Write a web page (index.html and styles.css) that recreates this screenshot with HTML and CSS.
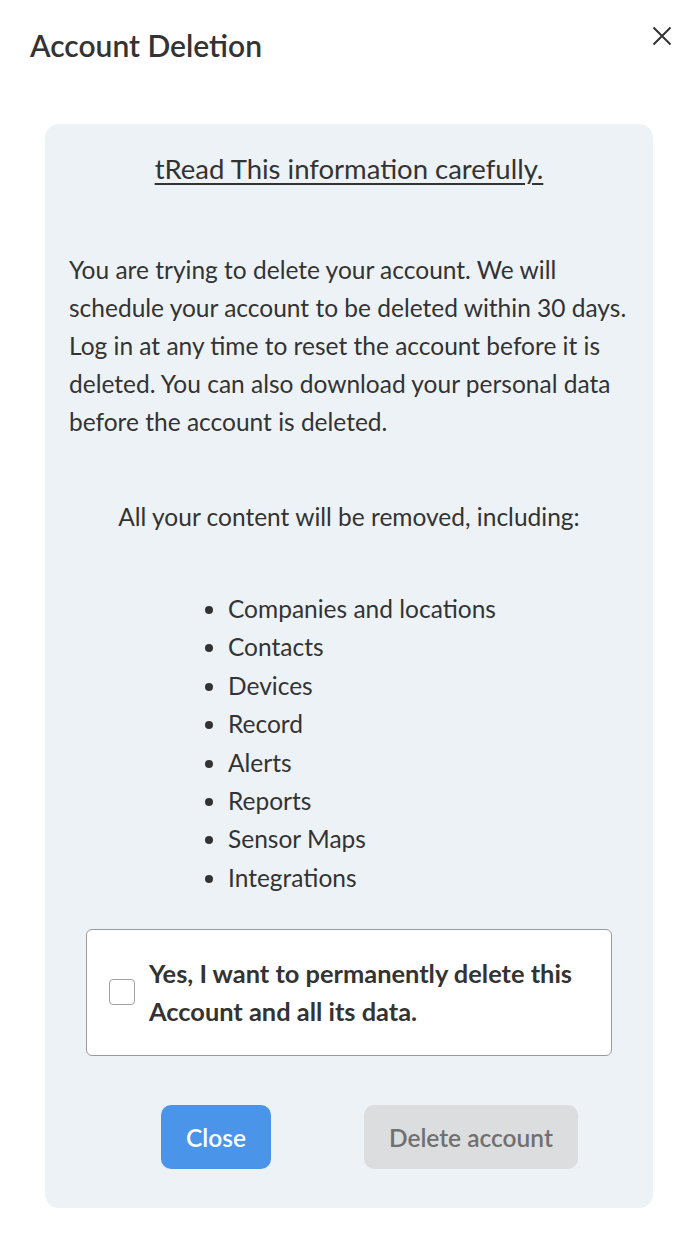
FILE: index.html
```html
<!DOCTYPE html>
<html lang="en">
<head>
<meta charset="utf-8">
<title>Account Deletion</title>
<link rel="stylesheet" href="styles.css">
</head>
<body>
<div class="modal">
  <header class="modal-header">
    <h1 class="modal-title">Account Deletion</h1>
    <button class="modal-close" aria-label="Close">
      <svg width="20" height="20" viewBox="0 0 20 20"><path d="M1.5 1.5L18.5 18.5M18.5 1.5L1.5 18.5" stroke="#333" stroke-width="2" fill="none"/></svg>
    </button>
  </header>
  <section class="card">
    <h2 class="card-heading">tRead This information carefully.</h2>
    <p class="card-text">You are trying to delete your account. We will schedule your account to be deleted within 30 days. Log in at any time to reset the account before it is deleted. You can also download your personal data before the account is deleted.</p>
    <p class="card-lead">All your content will be removed, including:</p>
    <ul class="card-list">
      <li>Companies and locations</li>
      <li>Contacts</li>
      <li>Devices</li>
      <li>Record</li>
      <li>Alerts</li>
      <li>Reports</li>
      <li>Sensor Maps</li>
      <li>Integrations</li>
    </ul>
    <label class="confirm">
      <span class="confirm-box"></span>
      <span class="confirm-text">Yes, I want to permanently delete this Account and all its data.</span>
    </label>
    <div class="actions">
      <button class="btn btn-primary">Close</button>
      <button class="btn btn-disabled">Delete account</button>
    </div>
  </section>
</div>
</body>
</html>
```
FILE: styles.css
```css
* { box-sizing: border-box; }
html, body { margin: 0; padding: 0; background: #ffffff; }
body {
  font-family: "Lato", "Liberation Sans", sans-serif;
  color: #333333;
  width: 688px;
}
.modal-header {
  display: flex;
  justify-content: space-between;
  align-items: flex-start;
  padding: 26px 16px 0 30px;
  height: 124px;
}
.modal-title {
  margin: 0;
  font-size: 30px;
  font-weight: 600;
  line-height: 38px;
  color: #333;
}
.modal-close {
  border: none;
  background: none;
  padding: 0;
  margin-top: 0;
  width: 20px;
  height: 20px;
  cursor: pointer;
}
.card {
  margin: 0 35px 0 45px;
  background: #edf2f6;
  border-radius: 14px;
  padding: 30px 24px 39px 24px;
}
.card-heading {
  margin: 0;
  text-align: center;
  font-size: 27.5px;
  font-weight: 400;
  line-height: 30px;
  text-decoration: underline;
  text-decoration-thickness: 1.5px;
  text-underline-offset: 4px;
}
.card-text {
  margin: 67px 0 0 0;
  font-size: 24.5px;
  line-height: 38px;
}
.card-lead {
  margin: 57px 0 0 0;
  text-align: center;
  font-size: 24.5px;
  line-height: 38px;
}
.card-list {
  margin: 54px 0 0 0;
  padding: 0 0 0 159px;
  font-size: 24.5px;
  line-height: 38.4px;
}
.confirm {
  display: flex;
  align-items: center;
  gap: 14px;
  margin: 32px 17px 0 17px;
  padding: 24px 22px 25px 22px;
  border: 1px solid #9a9a9a;
  border-radius: 6px;
  background: #ffffff;
  cursor: pointer;
}
.confirm-box {
  flex: none;
  width: 26px;
  height: 26px;
  border: 1px solid #a0a0a0;
  border-radius: 4px;
  background: #fff;
}
.confirm-text {
  font-size: 25.4px;
  font-weight: 700;
  line-height: 38px;
}
.actions {
  display: flex;
  gap: 93px;
  padding-left: 92px;
  margin-top: 49px;
}
.btn {
  border: none;
  height: 64px;
  border-radius: 10px;
  font-family: inherit;
  font-size: 24.5px;
  font-weight: 600;
  padding: 0 25px;
}
.btn-primary { background: #4a95ea; color: #ffffff; }
.btn-disabled { background: #dcdddf; color: #707070; }
```
